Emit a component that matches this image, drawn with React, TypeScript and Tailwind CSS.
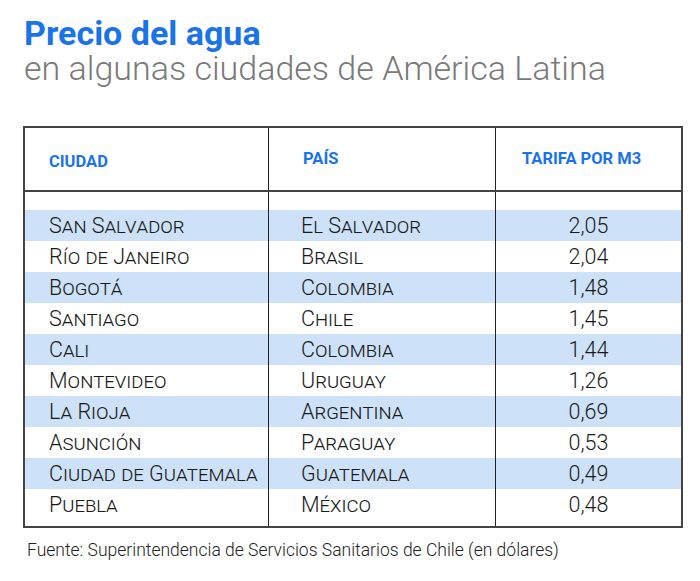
const ROWS = [
  { city: 'San Salvador',        country: 'El Salvador', price: '2,05' },
  { city: 'Río de Janeiro',      country: 'Brasil',      price: '2,04' },
  { city: 'Bogotá',              country: 'Colombia',    price: '1,48' },
  { city: 'Santiago',            country: 'Chile',       price: '1,45' },
  { city: 'Cali',                country: 'Colombia',    price: '1,44' },
  { city: 'Montevideo',          country: 'Uruguay',     price: '1,26' },
  { city: 'La Rioja',            country: 'Argentina',   price: '0,69' },
  { city: 'Asunción',            country: 'Paraguay',    price: '0,53' },
  { city: 'Ciudad de Guatemala', country: 'Guatemala',   price: '0,49' },
  { city: 'Puebla',              country: 'México',      price: '0,48' },
]

const cols = 'grid grid-cols-[243px_1px_226px_1px_1fr]'
const divider = 'bg-[#222]'
const head = 'text-[16.5px] leading-[20px] font-bold text-[#1a73e8]'

export default function App() {
  return (
    <div className="w-[700px] h-[581px] bg-white font-['Roboto',sans-serif] text-[#1a1a1a]">
      {/* título */}
      <div className="pl-[24px] pt-[16px]">
        <h1 className="text-[34px] leading-[34px] font-bold text-[#1a73e8]">Precio del agua</h1>
        <p className="text-[34px] leading-[34px] font-light text-[#7a7a7a] mt-[1px]">
          en algunas ciudades de América Latina
        </p>
      </div>

      {/* tabla */}
      <div className="ml-[23px] mt-[41px] w-[660px] border-2 border-[#444]">
        <div className={`${cols} h-[64px] border-b-2 border-[#444]`}>
          <div className={`pl-[24px] pt-[24px] ${head}`}>CIUDAD</div>
          <div className={divider} />
          <div className={`pl-[34px] pt-[21px] ${head}`}>PAÍS</div>
          <div className={divider} />
          <div className={`pl-[26px] pt-[21px] ${head}`}>TARIFA POR M3</div>
        </div>

        <div className={`${cols} h-[18px]`}>
          <div />
          <div className={divider} />
          <div />
          <div className={divider} />
          <div />
        </div>

        {ROWS.map((r, i) => (
          <div
            key={r.city}
            className={`${cols} h-[31px] text-[21.5px] leading-[31px] font-light [font-variant-caps:small-caps] ${i % 2 === 0 ? 'bg-[#cde2f8]' : 'bg-white'}`}
          >
            <div className="pl-[24px]">{r.city}</div>
            <div className={divider} />
            <div className="pl-[32px]">{r.country}</div>
            <div className={divider} />
            <div className="text-center">{r.price}</div>
          </div>
        ))}

        <div className={`${cols} h-[6px]`}>
          <div />
          <div className={divider} />
          <div />
          <div className={divider} />
          <div />
        </div>
      </div>

      <p className="pl-[27px] mt-[10px] text-[17.5px] leading-[24px] font-light text-[#222]">
        Fuente: Superintendencia de Servicios Sanitarios de Chile (en dólares)
      </p>
    </div>
  )
}
